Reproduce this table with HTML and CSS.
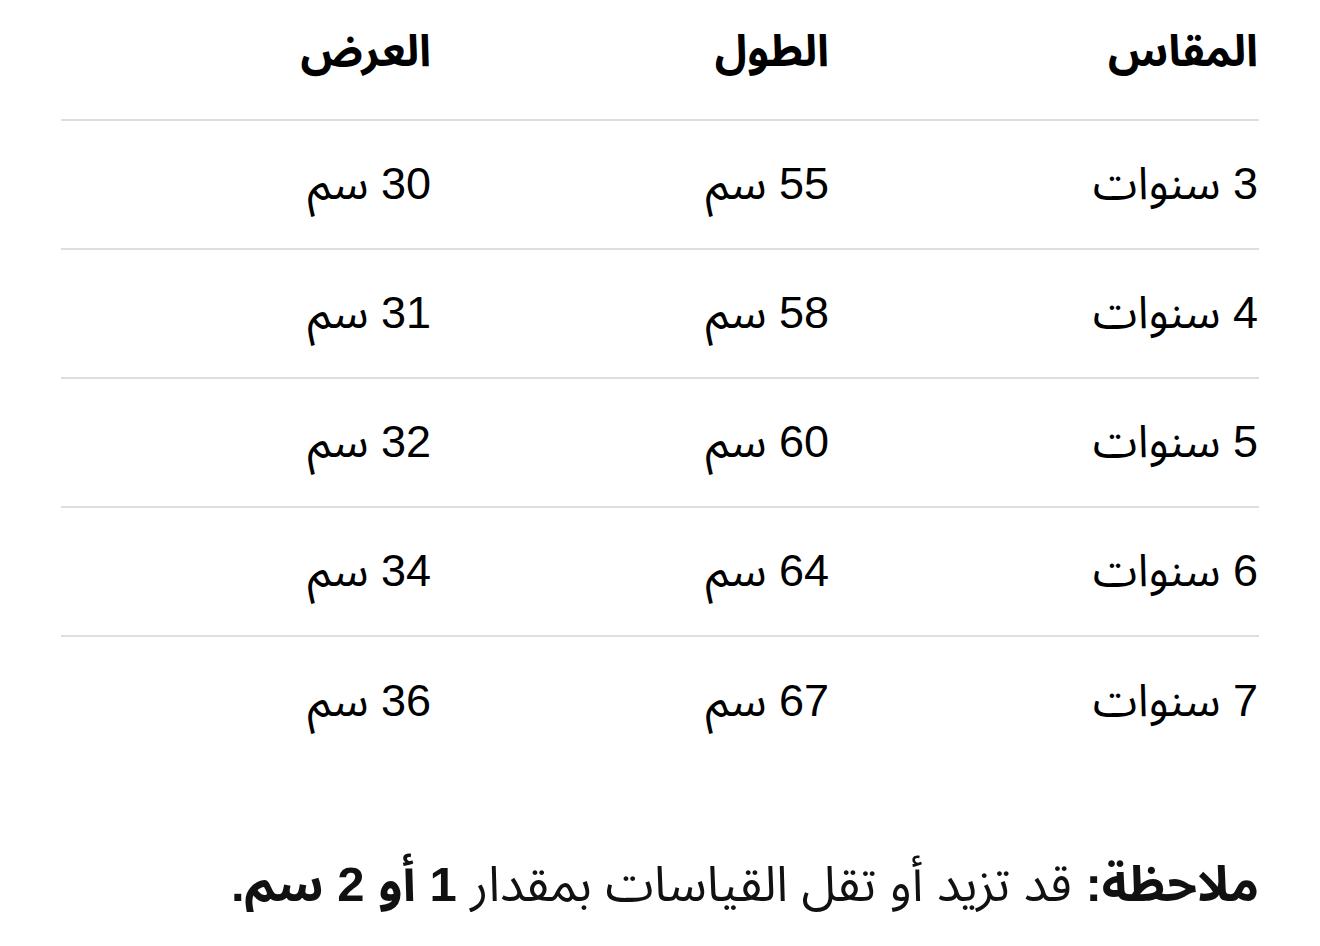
FILE: index.html
```html
<!DOCTYPE html>
<html lang="ar" dir="rtl">
<head>
<meta charset="utf-8">
<link rel="stylesheet" href="styles.css">
</head>
<body>
<div class="page">
  <div class="table">
    <div class="row head">
      <div class="cell">المقاس</div>
      <div class="cell">الطول</div>
      <div class="cell">العرض</div>
    </div>
    <div class="row">
      <div class="cell">3 سنوات</div>
      <div class="cell">55 سم</div>
      <div class="cell">30 سم</div>
    </div>
    <div class="row">
      <div class="cell">4 سنوات</div>
      <div class="cell">58 سم</div>
      <div class="cell">31 سم</div>
    </div>
    <div class="row">
      <div class="cell">5 سنوات</div>
      <div class="cell">60 سم</div>
      <div class="cell">32 سم</div>
    </div>
    <div class="row">
      <div class="cell">6 سنوات</div>
      <div class="cell">64 سم</div>
      <div class="cell">34 سم</div>
    </div>
    <div class="row last">
      <div class="cell">7 سنوات</div>
      <div class="cell">67 سم</div>
      <div class="cell">36 سم</div>
    </div>
  </div>
  <p class="note"><b>ملاحظة:</b> قد تزيد أو تقل القياسات بمقدار <b>1 أو 2 سم.</b></p>
</div>
</body>
</html>
```
FILE: styles.css
```css
html, body {
  margin: 0;
  padding: 0;
  background: #ffffff;
}
body {
  font-family: "Liberation Sans", "Noto Sans Arabic", "DejaVu Sans", sans-serif;
  color: #000000;
}
.page {
  padding: 0 61px;
}
.table {
  display: flex;
  flex-direction: column;
}
.row {
  display: grid;
  grid-template-columns: 429px 398px 1fr;
  align-items: center;
  height: 129px;
  box-sizing: border-box;
  border-bottom: 2px solid #dedede;
  font-size: 45px;
}
.row.head {
  height: 121px;
  font-weight: bold;
  font-size: 44px;
  padding-bottom: 16px;
}
.row.last {
  border-bottom: none;
}
.cell {
  text-align: right;
  padding-right: 1px;
}
.note {
  margin: 90px 0 0;
  font-size: 49px;
  line-height: 56px;
  color: #111111;
}
.note b {
  font-weight: bold;
}
```
